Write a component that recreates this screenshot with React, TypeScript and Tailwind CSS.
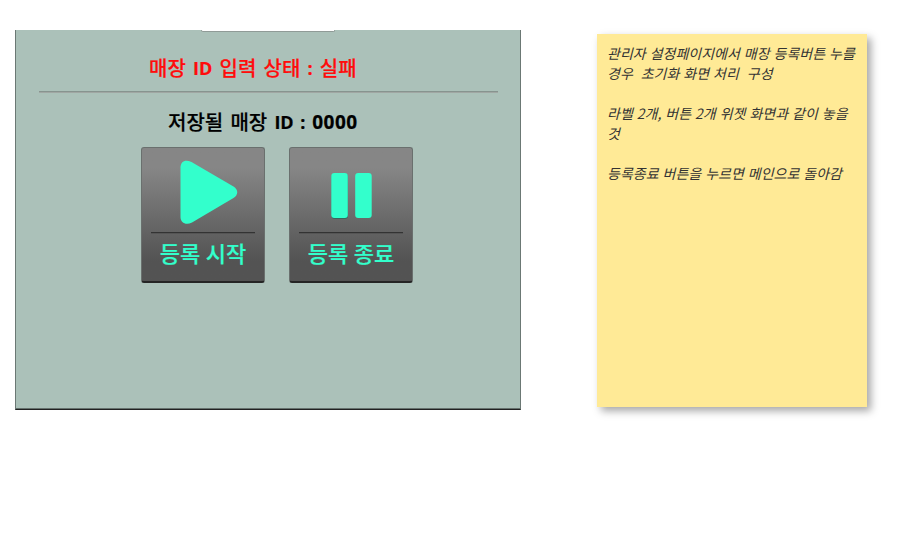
const labelFont = "font-['Open_Sans','Noto_Sans_CJK_KR',sans-serif]";

function ActionButton({ label, children }: { label: string; children: React.ReactNode }) {
  return (
    <button
      type="button"
      className="flex h-[136px] w-[124px] flex-col items-center rounded-[3px] border border-[#6a706e] border-b-2 border-b-[#252525] bg-linear-to-b from-[#868686] from-15% to-[#535353] to-85%"
    >
      <svg className="h-[84px] w-full shrink-0" viewBox="0 0 122 84" fill="#33ffcc">
        {children}
      </svg>
      <span className="h-[2px] w-[104px] shrink-0 border-b border-[#555555] bg-[#333333]" />
      <span className={`mt-[3px] text-[22px] leading-[32px] font-medium whitespace-nowrap text-[#33ffcc] [-webkit-text-stroke:0.2px_#33ffcc] ${labelFont}`}>
        {label}
      </span>
    </button>
  );
}

export default function App() {
  return (
    <main className="flex h-[536px] w-[917px] items-start overflow-hidden bg-white">
      <section className="mt-[30px] ml-[15px] h-[380px] w-[506px] shrink-0 border-x border-b border-x-[#6b7874] border-b-[#222222] bg-[#abc1b9] shadow-[inset_0_-1px_0_#65716d]">
        <div className="ml-[185px] h-[2px] w-[134px] rounded-b-[2px] border-x border-b border-[#909b97] bg-white" />
        <p className={`mt-[23px] ml-[133px] h-[28px] text-[20px] leading-[28px] font-medium [word-spacing:2px] whitespace-pre text-[#ff0c0c] [-webkit-text-stroke:0.2px_#ff0c0c] ${labelFont}`}>
          매장 <b className="align-[1px] text-[18px] leading-none font-bold">ID</b> 입력 상태 <b className="align-[1px] text-[18px] leading-none">:</b> 실패
        </p>
        <div className="mt-[8px] ml-[23px] h-[2px] w-[459px] border-b border-[#a0a7a3] bg-[#87948f]" />
        <p className={`mt-[16px] ml-[152px] h-[28px] text-[20px] leading-[28px] font-medium [word-spacing:2px] whitespace-pre text-black [-webkit-text-stroke:0.2px_#000] ${labelFont}`}>
          저장될 매장 <b className="align-[1px] text-[18px] leading-none font-bold">ID : <span className="text-[19px] tracking-[0.5px]">0000</span></b>
        </p>
        <div className="mt-[10px] ml-[125px] flex gap-6">
          <ActionButton label="등록 시작">
            <path d="M38.5 19.5C38.5 13 43.5 11 49.5 14L91.5 38.5C96.5 41.5 96.5 47 91.5 50L50 74.5C44 77.5 38.5 75 38.5 69Z" />
          </ActionButton>
          <ActionButton label="등록 종료">
            <rect x="41.8" y="25.7" width="16" height="45" rx="2.5" fill="#27665a" />
            <rect x="41.3" y="25" width="16.5" height="45" rx="3" />
            <rect x="65.2" y="25" width="16.5" height="45" rx="3" />
          </ActionButton>
        </div>
      </section>
      <aside className="mt-[34px] ml-[76px] h-[373px] w-[270px] shrink-0 bg-[#ffea96] pt-[9px] pl-[10px] font-['Noto_Sans_CJK_KR',sans-serif] text-[14px] leading-[20px] [word-spacing:0.85px] whitespace-pre text-[#333333] italic shadow-[4px_4px_8px_rgba(0,0,0,0.35)]">
        <p>관리자 설정페이지에서 매장 등록버튼 누를</p>
        <p>경우  초기화 화면 처리  구성</p>
        <p className="mt-5">라벨 2개, 버튼 2개 위젯 화면과 같이 놓을</p>
        <p>것</p>
        <p className="mt-5">등록종료 버튼을 누르면 메인으로 돌아감</p>
      </aside>
    </main>
  );
}
